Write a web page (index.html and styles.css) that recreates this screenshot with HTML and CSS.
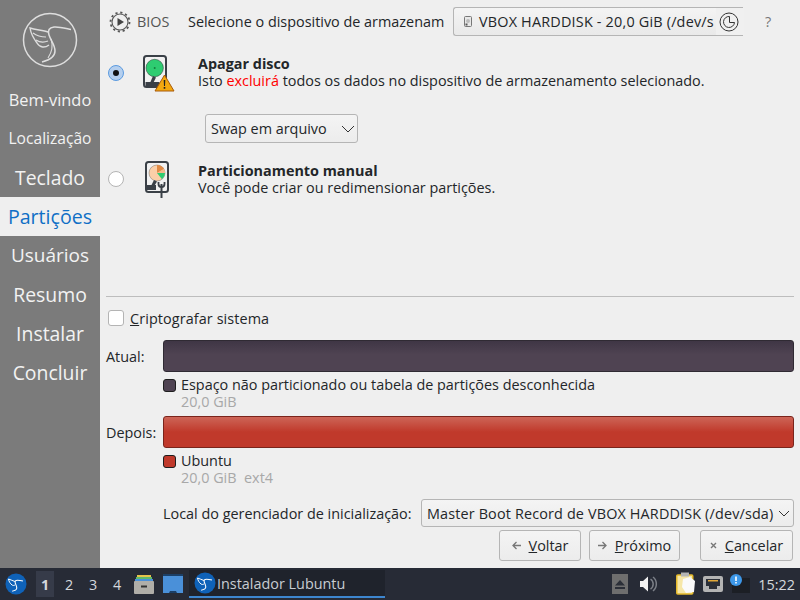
FILE: index.html
```html
<!DOCTYPE html>
<html lang="pt-BR">
<head>
<meta charset="utf-8">
<title>Instalador Lubuntu</title>
<link rel="stylesheet" href="styles.css">
</head>
<body>
<div class="window">
  <aside class="sidebar">
    <div class="logo">
      <svg width="56" height="56" viewBox="0 0 56 56" fill="none" stroke="#dedede">
        <circle cx="28" cy="28" r="26.500" stroke-width="1.500"/>
        <path d="M49 17.500C44 16.500 37 14.500 32 15C27 15.500 25.500 18.500 27 23C29 29 33 33 33 39C33 45 28 48 20 50" stroke-width="1.500"/>
        <path d="M26 20C21 18 14 18 8 16C9 22 12 27 15 31C18 36 23 36 27 33" stroke-width="1.400"/>
        <path d="M11 21C15 24 19 25 24 25M14 28C17 30 21 31 26 29" stroke-width="1.200"/>
        <path d="M29 27C31 33 30 40 26 46" stroke-width="1.100"/>
      </svg>
    </div>
    <nav class="steps">
      <div class="step step-fit-a">Bem-vindo</div>
      <div class="step step-fit-b">Localização</div>
      <div class="step">Teclado</div>
      <div class="step step-on">Partições</div>
      <div class="step step-fit-c">Usuários</div>
      <div class="step">Resumo</div>
      <div class="step">Instalar</div>
      <div class="step">Concluir</div>
    </nav>
  </aside>

  <main class="main">
    <div class="toprow">
      <svg class="bios-icon" width="22" height="22" viewBox="0 0 22 22" fill="none" stroke="#555">
        <circle cx="11" cy="11" r="8" stroke-width="1.100"/>
        <circle cx="11" cy="11" r="9.500" stroke-width="1.800" stroke-dasharray="2.200 2.770"/>
        <path d="M8.500 7v8l6.500-4z" fill="#444" stroke="none"/>
      </svg>
      <span class="bios">BIOS</span>
      <span class="select-label">Selecione o dispositivo de armazenam</span>
      <div class="disk-combo">
        <svg class="disk-mini" width="10" height="11" viewBox="0 0 10 11"><rect x="1.500" y="0.500" width="7" height="10" rx="1" fill="#e8e8e8" stroke="#777"/><circle cx="5" cy="5" r="2" fill="#bbb"/><rect x="2.500" y="7.500" width="2" height="2" fill="#555"/></svg>
        <span class="disk-text">VBOX HARDDISK - 20,0 GiB (/dev/s</span>
        <span class="disk-fade"></span>
        <svg class="disk-clock" width="20" height="20" viewBox="0 0 20 20" fill="none" stroke="#333" stroke-width="1"><circle cx="10" cy="10" r="9"/><path d="M10.500 4.500A5.500 5.500 0 1 0 15.500 10.500H10.500V4.500"/></svg>
      </div>
      <span class="help">?</span>
    </div>

    <div class="choice choice-erase">
      <span class="radio radio-on"></span>
      <svg class="hdd" width="34" height="38" viewBox="0 0 34 38">
        <rect x="2" y="2" width="22" height="31" rx="2.500" fill="#f1f1f1" stroke="#3a4047" stroke-width="2"/>
        <circle cx="12.700" cy="14" r="8.700" fill="#2ecc71" stroke="#2b2f33" stroke-width=".5"/>
        <circle cx="12.700" cy="14" r="1" fill="#15803d"/>
        <path d="M3.500 28h14v4h-14z" fill="#3a4047"/>
        <path d="M8 29l3-7 3 1.500-3 6z" fill="#3a4047"/>
        <path d="M22.500 21l9.500 16H13z" fill="#f4a80f" stroke="#a85b0a" stroke-width="1"/>
        <path d="M21.700 26h1.600l-.3 6h-1zM21.700 33h1.600v1.700h-1.600z" fill="#222"/>
      </svg>
      <div class="choice-text choice-text-up">
        <div class="choice-title">Apagar disco</div>
        <div>Isto <span class="danger">excluirá</span> todos os dados no dispositivo de armazenamento selecionado.</div>
      </div>
    </div>

    <div class="swap-row">
      <div class="combo swap-combo">
        <span>Swap em arquivo</span>
        <svg width="14" height="8" viewBox="0 0 14 8" fill="none" stroke="#333"><path d="M1 1l6 6 6-6"/></svg>
      </div>
    </div>

    <div class="choice choice-manual">
      <span class="radio"></span>
      <svg class="hdd" width="34" height="40" viewBox="0 0 34 40">
        <rect x="4" y="3" width="22" height="30" rx="2.500" fill="#f1f1f1" stroke="#3a4047" stroke-width="2"/>
        <circle cx="15" cy="14" r="8" fill="#fbcfa8" stroke="#555" stroke-width=".4"/>
        <path d="M15 14V6a8 8 0 0 1 7 4z" fill="#e08a45"/>
        <path d="M15 14l7-4a8 8 0 0 1 1 4z" fill="#f6b98a"/>
        <path d="M15 14h8a8 8 0 0 1-3 6.200z" fill="#2ecc71"/>
        <path d="M5 26h9v5H5z" fill="#3a4047"/>
        <path d="M9 27l3-6 3 1.500-3 5z" fill="#3a4047"/>
        <path d="M19.500 25v14" stroke="#3a4047" stroke-width="2"/>
        <path d="M16.500 23v2a3 3 0 0 0 6 0v-2" fill="none" stroke="#3a4047" stroke-width="1.800"/>
      </svg>
      <div class="choice-text">
        <div class="choice-title">Particionamento manual</div>
        <div>Você pode criar ou redimensionar partições.</div>
      </div>
    </div>

    <div class="separator"></div>

    <label class="encrypt">
      <span class="checkbox"></span>
      <span class="encrypt-text"><u>C</u>riptografar sistema</span>
    </label>

    <div class="bar-row bar-row-now">
      <span class="bar-label">Atual:</span>
      <div class="bar bar-free"></div>
    </div>
    <div class="legend">
      <span class="swatch swatch-free"></span>
      <div>
        <div>Espaço não particionado ou tabela de partições desconhecida</div>
        <div class="muted">20,0 GiB</div>
      </div>
    </div>

    <div class="bar-row bar-row-after">
      <span class="bar-label">Depois:</span>
      <div class="bar bar-ubuntu"></div>
    </div>
    <div class="legend">
      <span class="swatch swatch-ubuntu"></span>
      <div>
        <div>Ubuntu</div>
        <div class="muted">20,0 GiB&nbsp; ext4</div>
      </div>
    </div>

    <div class="boot-row">
      <span>Local do gerenciador de inicialização:</span>
      <div class="combo boot-combo">
        <span class="boot-text">Master Boot Record de VBOX HARDDISK (/dev/sda)</span>
        <svg width="12" height="7" viewBox="0 0 12 7" fill="none" stroke="#333"><path d="M1 1l5 5 5-5"/></svg>
      </div>
    </div>

    <div class="actions">
      <button class="btn btn-back">
        <svg width="9" height="9" viewBox="0 0 9 9" fill="none" stroke="#777" stroke-width="1.300"><path d="M9 4.500H1.500M4.500 1l-3.500 3.500 3.500 3.500"/></svg>
        <span><u>V</u>oltar</span>
      </button>
      <button class="btn btn-next">
        <svg width="9" height="9" viewBox="0 0 9 9" fill="none" stroke="#777" stroke-width="1.300"><path d="M0 4.500h7.500M4.500 1l3.500 3.500-3.500 3.500"/></svg>
        <span><u>P</u>róximo</span>
      </button>
      <button class="btn btn-cancel">
        <svg width="7" height="7" viewBox="0 0 7 7" fill="none" stroke="#777" stroke-width="1.400"><path d="M1 1l5 5M6 1L1 6"/></svg>
        <span><u>C</u>ancelar</span>
      </button>
    </div>
  </main>
</div>

<footer class="taskbar">
  <svg class="tb-logo" width="22" height="22" viewBox="0 0 22 22" fill="none" stroke="#fff">
    <circle cx="11" cy="11" r="10.500" fill="#0f62b8" stroke="none"/>
    <path d="M18 8c-2-.5-4-.8-5.500-.8-2 0-2.700 1-2.300 2.600.6 2 1.900 3.700 1.500 5.700-.3 1.500-2 2.200-4.500 2.700" stroke-width="1.100"/>
    <path d="M10 8.500C8 7.500 5.500 7 3.500 6c.4 2.500 1.700 4.500 3.500 6 1 .7 2.200.6 3.200-.2" stroke-width="1"/>
  </svg>
  <div class="desktops">
    <span class="desk desk-on">1</span><span class="desk">2</span><span class="desk">3</span><span class="desk">4</span>
  </div>
  <svg class="tb-files" width="20" height="20" viewBox="0 0 20 20">
    <path d="M3 1h14v3H3z" fill="#e6c34a"/><path d="M2 3h16v3H2z" fill="#5fb86b"/><path d="M1 5h18v3H1z" fill="#4a90d9"/>
    <rect x="0" y="7" width="20" height="13" rx="1" fill="#b0aea8"/><rect x="7" y="11.500" width="6" height="2" fill="#333"/>
  </svg>
  <svg class="tb-desktop" width="20" height="20" viewBox="0 0 20 20">
    <rect x="0" y="1" width="20" height="18" fill="#4a90d9"/><rect x="0" y="0" width="20" height="2" fill="#1c3f66"/><path d="M6 19l1-2h6l1 2z" fill="#1c3f66"/>
  </svg>
  <div class="task">
    <svg width="22" height="22" viewBox="0 0 22 22" fill="none" stroke="#fff">
      <circle cx="11" cy="11" r="10.500" fill="#0f62b8" stroke="none"/>
      <path d="M18 8c-2-.5-4-.8-5.500-.8-2 0-2.700 1-2.300 2.600.6 2 1.900 3.700 1.500 5.700-.3 1.500-2 2.200-4.500 2.700" stroke-width="1.100"/>
      <path d="M10 8.500C8 7.500 5.500 7 3.500 6c.4 2.500 1.700 4.500 3.500 6 1 .7 2.200.6 3.200-.2" stroke-width="1"/>
    </svg>
    <span>Instalador Lubuntu</span>
  </div>
  <div class="tray">
    <span class="eject"><svg width="10" height="9" viewBox="0 0 10 9" fill="#2b2f38"><path d="M5 0l5 5.500H0zM0 7h10v2H0z"/></svg></span>
    <svg class="tray-vol" width="18" height="16" viewBox="0 0 18 16"><path d="M0 5h3l5-4.500v15L3 11H0z" fill="#f2f2f2"/><path d="M10.500 3a6 6 0 0 1 0 10M13 1a9 9 0 0 1 0 14" fill="none" stroke="#7b7f87" stroke-width="1.500"/></svg>
    <svg class="tray-clip" width="20" height="24" viewBox="0 0 20 24"><rect x="0.750" y="3" width="16" height="19" rx="1" fill="#f6e7a8" stroke="#e5b92b" stroke-width="1.500"/><rect x="5" y="0.500" width="8" height="4" fill="#b5b5b5"/><path d="M7 7l7-2 5 4-1 11-8 1-4-6z" fill="#fafafa"/></svg>
    <svg class="tray-net" width="20" height="16" viewBox="0 0 20 16"><rect x="0" y="0" width="20" height="16" rx="2" fill="#b4b4b4"/><path d="M3 3h14v7h-3v3H6v-3H3z" fill="#2b2f38"/><path d="M5 4h10v1.500H5z" fill="#e2a93a"/></svg>
    <svg class="tray-note" width="20" height="20" viewBox="0 0 20 20"><rect x="2" y="4" width="18" height="15" fill="#1c1f25"/><circle cx="6" cy="6" r="6" fill="#3d97e8"/><path d="M5.200 2.500h1.600v4.500H5.200zM5.200 8h1.600v1.500H5.200z" fill="#fff"/></svg>
    <span class="clock">15:22</span>
  </div>
</footer>
</body>
</html>
```

FILE: styles.css
```css
* { box-sizing: border-box; }
html, body { margin: 0; padding: 0; }
body {
  width: 800px;
  height: 600px;
  overflow: hidden;
  background: #efefef;
  color: #232629;
  font: 14.4px/17px "Open Sans", "Noto Sans", sans-serif;
  display: flex;
  flex-direction: column;
}
.window { flex: 1; display: flex; min-height: 0; }

.sidebar { width: 100px; background: #7b7b7b; flex: none; }
.logo { height: 80px; padding-top: 12px; display: flex; justify-content: center; }
.steps { display: flex; flex-direction: column; }
.step {
  height: 39px;
  display: flex;
  align-items: center;
  justify-content: center;
  color: #f2f2f2;
  font-size: 19.4px;
}
.step-fit-a { font-size: 16.4px; }
.step-fit-b { font-size: 15.6px; }
.step-fit-c { font-size: 19px; }
.step-on { background: #efefef; color: #0f6fc6; font-size: 19.6px; }

.main { flex: 1; min-width: 0; padding: 7px 6px 0; display: flex; flex-direction: column; }

.toprow { height: 29px; display: flex; align-items: center; }
.bios-icon { margin-left: 3px; }
.bios { margin-left: 6px; width: 51px; color: #555; }
.select-label { width: 265px; white-space: nowrap; }
.disk-combo {
  position: relative;
  width: 290px;
  height: 29px;
  display: flex;
  align-items: center;
  padding-left: 9px;
  border: 1px solid #b5b5b5;
  border-right: 0;
  border-radius: 3px 0 0 3px;
  background: linear-gradient(#f4f4f4, #e9e9e9);
  white-space: nowrap;
}
.disk-text { margin-left: 6px; letter-spacing: 0.2px; }
.disk-fade {
  position: absolute;
  left: 262px; top: 0; bottom: 0;
  width: 28px;
  background: #f0f0f0;
}
.disk-clock { position: absolute; left: 265px; top: 4px; }
.help { margin-left: 22px; color: #777; }

.choice { display: flex; align-items: center; }
.radio {
  width: 16px; height: 16px;
  border-radius: 50%;
  border: 1px solid #b4b4b4;
  background: #fff;
  flex: none;
  margin-left: 2px;
  display: flex;
  align-items: center;
  justify-content: center;
}
.radio-on { border-color: #5b9be0; background: #b5cfee; }
.radio-on::after { content: ""; width: 6px; height: 6px; border-radius: 50%; background: #111; }
.hdd { flex: none; margin-left: 18px; }
.choice-text { margin-left: 22px; }
.choice-text-up { margin-bottom: 2px; }
.choice-title { font-weight: 700; }
.danger { color: #ff0000; }
.choice-erase { margin-top: 18px; height: 38px; }
.choice-manual { margin-top: 17px; height: 38px; }

.swap-row { margin-top: 22px; padding-left: 99px; }
.combo {
  height: 29px;
  display: flex;
  align-items: center;
  justify-content: space-between;
  padding: 0 5px;
  border: 1px solid #b5b5b5;
  border-radius: 3px;
  background: linear-gradient(#f4f4f4, #ececec);
  white-space: nowrap;
}
.swap-combo { width: 153px; padding-right: 2px; }

.separator { margin-top: 98px; height: 1px; background: #bdbdbd; flex: none; }

.encrypt { margin-top: 13px; height: 16px; display: flex; align-items: center; gap: 6px; padding-left: 2px; letter-spacing: 0.1px; }
.checkbox { width: 16px; height: 16px; border: 1px solid #b4b4b4; border-radius: 3px; background: #fff; flex: none; }

.bar-row { height: 32px; display: flex; align-items: center; }
.bar-row-now { margin-top: 14px; }
.bar-row-after { margin-top: 6px; }
.bar-label { width: 57px; flex: none; }
.bar { flex: 1; height: 32px; border-radius: 3px; }
.bar-free { background: linear-gradient(#3f3645, #4f4352 45%, #4f4352); border: 1px solid #2f2a33; }
.bar-ubuntu { background: linear-gradient(#cd6557, #c0392b 50%, #c0392b); border: 1px solid #7a241b; }

.legend { margin-top: 4px; padding-left: 57px; display: flex; gap: 5px; }
.swatch { width: 13px; height: 13px; margin-top: 3px; border: 1px solid #1e1e1e; border-radius: 3px; flex: none; }
.swatch-free { background: #4f4352; }
.swatch-ubuntu { background: #c0392b; }
.muted { color: #a8a8a8; }

.boot-row { margin-top: 13px; padding-left: 57px; display: flex; align-items: center; justify-content: space-between; }
.boot-combo { width: 373px; height: 28px; padding-right: 3px; }
.boot-text { letter-spacing: 0.15px; }

.actions { margin-top: 3px; display: flex; justify-content: flex-end; padding-right: 1px; }
.btn {
  height: 31px;
  display: flex;
  align-items: center;
  justify-content: center;
  gap: 8px;
  border: 1px solid #b5b5b5;
  border-radius: 3px;
  background: linear-gradient(#f4f4f4, #ececec);
  color: #232629;
  font: inherit;
  padding: 0;
}
.btn-back { width: 82px; }
.btn-next { width: 91px; margin-left: 8px; }
.btn-cancel { width: 93px; margin-left: 20px; }

.taskbar {
  height: 32px;
  flex: none;
  background: #272b36;
  color: #d5d8dd;
  display: flex;
  align-items: center;
}
.tb-logo { margin-left: 5px; }
.desktops { margin-left: 9px; display: flex; }
.desk { width: 24px; height: 26px; display: flex; align-items: center; justify-content: center; }
.desk-on { width: 18px; margin-right: 3px; background: #363b49; font-weight: 700; }
.tb-files { margin-left: 5px; }
.tb-desktop { margin-left: 9px; }
.task {
  margin-left: 6px;
  width: 196px;
  height: 28px;
  display: flex;
  align-items: center;
  gap: 1px;
  padding-left: 5px;
  background: #1f232c;
  border-bottom: 2px solid #3d86cf;
  color: #c8ccd2;
}
.tray { margin-left: auto; display: flex; align-items: center; }
.eject { width: 16px; height: 20px; background: #6e6e6e; display: flex; align-items: center; justify-content: center; }
.tray-vol { margin-left: 12px; }
.tray-clip { margin-left: 18px; }
.tray-net { margin-left: 7px; }
.tray-note { margin-left: 7px; }
.clock { margin-left: 8px; margin-right: 5px; }
```
